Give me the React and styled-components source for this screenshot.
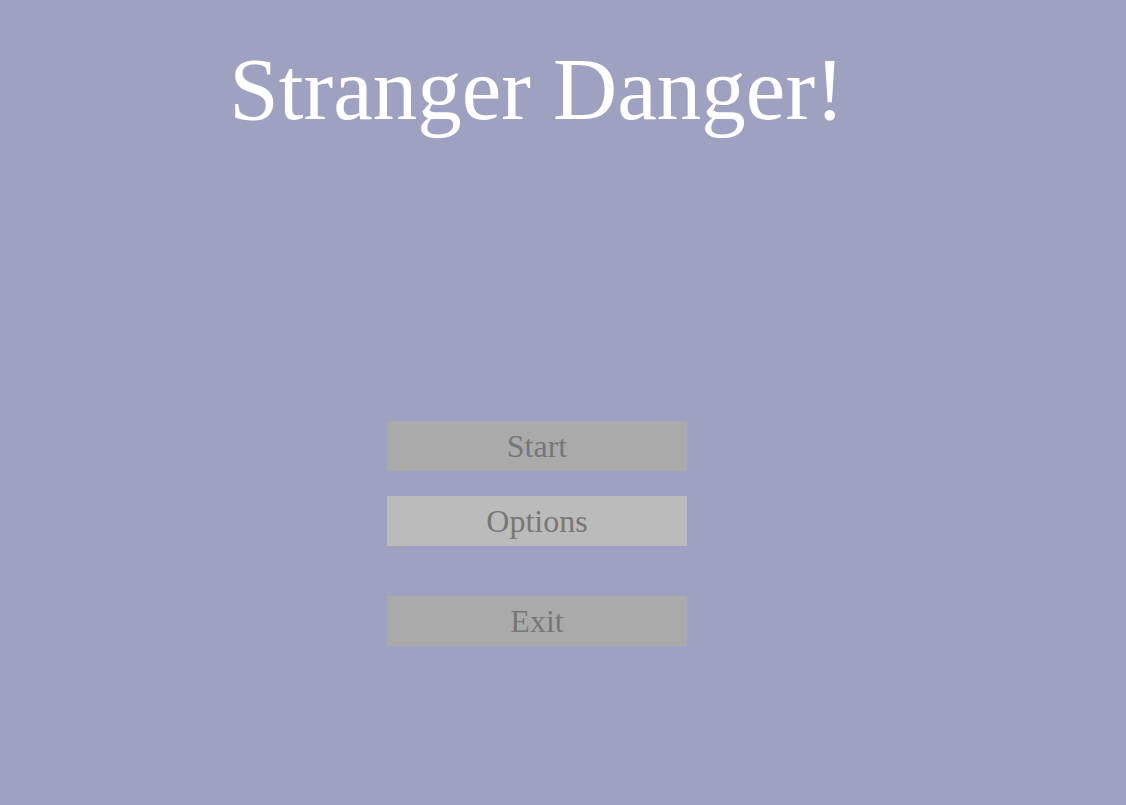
import React from "react";
import styled, { createGlobalStyle } from "styled-components";

const Global = createGlobalStyle`
    html, body {
        margin: 0;
        padding: 0;
        background-color: #9ea2c0;
    }
`

const Screen = styled.div`
    width: 1074px;
    height: 805px;
    display: flex;
    flex-direction: column;
    align-items: center;
    font-family: "Liberation Serif", "Times New Roman", serif;
`

const Title = styled.h1`
    margin: 0;
    padding-top: 38px;
    font-size: 89px;
    font-weight: normal;
    line-height: 102px;
    color: #ffffff;
`

const Menu = styled.div`
    display: flex;
    flex-direction: column;
    margin-top: 281px;
`

const MenuButton = styled.button`
    width: 300px;
    height: 50px;
    margin-top: ${(p) => p.gap}px;
    border: none;
    padding: 0;
    font-family: inherit;
    font-size: 32px;
    color: #777777;
    background-color: ${(p) => (p.hover ? "#bbbbbb" : "#aaaaaa")};
    cursor: pointer;
`

function App(){

    return(
        <Screen>
            <Global />
            <Title>Stranger Danger!</Title>
            <Menu>
                <MenuButton gap={0}>Start</MenuButton>
                <MenuButton gap={25} hover>Options</MenuButton>
                <MenuButton gap={50}>Exit</MenuButton>
            </Menu>
        </Screen>
    )

}

export default App
